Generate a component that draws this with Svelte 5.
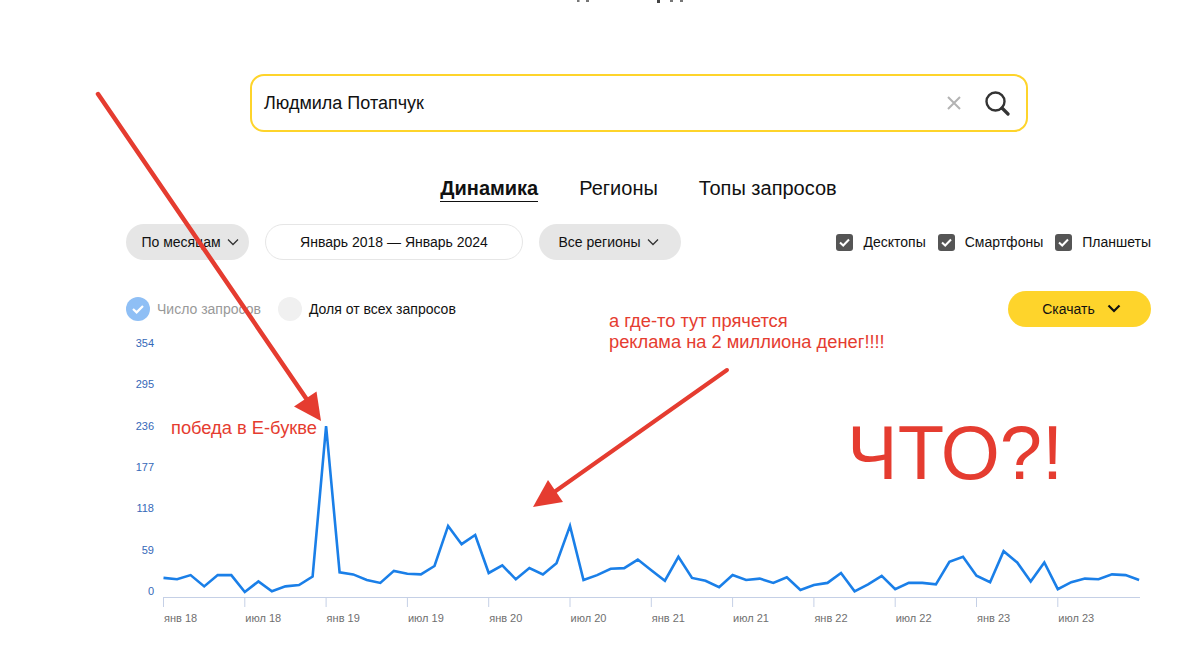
<script>
  const values = [
    20, 18, 24, 8, 24, 24, 0, 15, 1, 8, 10, 22, 236, 28, 25, 17, 13, 30, 26, 25, 37, 94, 68, 81,
    27, 38, 18, 34, 25, 41, 94, 17, 24, 33, 34, 46, 31, 16, 50, 20, 16, 7, 24, 17, 19, 13, 21, 3,
    10, 13, 27, 1, 11, 23, 4, 13, 13, 11, 43, 50, 23, 14, 58, 42, 15, 42, 4, 14, 19, 18, 25, 24, 17
  ];
  const yTicks = [354, 295, 236, 177, 118, 59, 0];
  const xTicks = ["янв 18", "июл 18", "янв 19", "июл 19", "янв 20", "июл 20", "янв 21", "июл 21", "янв 22", "июл 22", "янв 23", "июл 23"];

  const step = 13.55;
  const left = 163.5;
  const zero = 592;
  const perUnit = 0.7034;

  const linePoints = values
    .map((v, i) => `${(left + i * step).toFixed(1)},${(zero - v * perUnit).toFixed(1)}`)
    .join(" ");
</script>

<main>
  <!-- от заголовка над полем в кадр попали только нижние кончики букв -->
  <svg class="top-bits" width="1194" height="74" viewBox="0 0 1194 74">
    <path d="M577 0h2.5v2h-2.5zM586 0h3v2h-3zM670 0h3v2h-3zM680 0h3v2h-3z" fill="#777" />
    <path d="M657 0h3v3h-3z" fill="#444" />
  </svg>

  <div class="search">
    <span class="query">Людмила Потапчук</span>
    <svg class="clear" width="18" height="18" viewBox="0 0 18 18">
      <path d="M3 3l12 12M15 3L3 15" stroke="#b3b3b3" stroke-width="2" fill="none" />
    </svg>
    <svg class="loupe" width="26" height="26" viewBox="0 0 26 26">
      <circle cx="11.5" cy="11.5" r="9" stroke="#333" stroke-width="2.4" fill="none" />
      <path d="M18 18l6 6" stroke="#333" stroke-width="3.2" stroke-linecap="round" />
    </svg>
  </div>

  <nav class="tabs">
    <span class="tab active">Динамика</span>
    <span class="tab">Регионы</span>
    <span class="tab">Топы запросов</span>
  </nav>

  <div class="filters">
    <div class="pill grey months">
      По месяцам
      <svg width="12" height="8" viewBox="0 0 12 8"><path d="M1 1.5l5 5 5-5" stroke="#333" stroke-width="1.3" fill="none" /></svg>
    </div>
    <div class="pill range">Январь 2018 — Январь 2024</div>
    <div class="pill grey regions">
      Все регионы
      <svg width="12" height="8" viewBox="0 0 12 8"><path d="M1 1.5l5 5 5-5" stroke="#333" stroke-width="1.3" fill="none" /></svg>
    </div>
    <div class="devices">
      {#each ["Десктопы", "Смартфоны", "Планшеты"] as device}
        <label class="device">
          <span class="box">
            <svg width="17" height="17" viewBox="0 0 17 17"><path d="M4 8.5l3.2 3L13 5.5" stroke="#fff" stroke-width="2" fill="none" /></svg>
          </span>
          {device}
        </label>
      {/each}
    </div>
  </div>

  <div class="modes">
    <div class="mode muted">
      <span class="dot on">
        <svg width="24" height="24" viewBox="0 0 24 24"><path d="M7 12l3.6 3.4L17 9" stroke="#fff" stroke-width="2.2" fill="none" /></svg>
      </span>
      Число запросов
    </div>
    <div class="mode">
      <span class="dot"></span>
      Доля от всех запросов
    </div>
    <button class="download">
      Скачать
      <svg width="14" height="10" viewBox="0 0 14 10"><path d="M1.5 1.5L7 7l5.5-5.5" stroke="#111" stroke-width="2.2" fill="none" /></svg>
    </button>
  </div>

  <svg class="chart" width="1194" height="320" viewBox="0 330 1194 320">
    {#each yTicks as tick, i}
      <text class="y-label" x="154" y={347 + i * 41.3} text-anchor="end">{tick}</text>
    {/each}
    <path d="M163.5 597.5H1140" stroke="#c5d0e6" stroke-width="1" />
    {#each xTicks as label, i}
      <path d={`M${163.5 + i * 6 * step} 597v10`} stroke="#c5d0e6" stroke-width="1" />
      <text class="x-label" x={164 + i * 6 * step} y="622">{label}</text>
    {/each}
    <polyline points={linePoints} fill="none" stroke="#1a7fe8" stroke-width="2.6" stroke-linejoin="miter" />
  </svg>

  <!-- пометки поверх скриншота -->
  <svg class="marks" width="1194" height="655" viewBox="0 0 1194 655">
    <path d="M98 94L312 407" stroke="#e53c30" stroke-width="4.5" stroke-linecap="round" />
    <path d="M321 421L294 406.5L316.5 391.5Z" fill="#e53c30" />
    <path d="M727 370L550 495" stroke="#e53c30" stroke-width="4" stroke-linecap="round" />
    <path d="M533 507L548 480L563 502Z" fill="#e53c30" />
  </svg>
  <div class="note win">победа в Е-букве</div>
  <div class="note ads">а где-то тут прячется<br />реклама на 2 миллиона денег!!!!</div>
  <div class="what">ЧТО?!</div>
</main>

<style>
  :global(body) {
    margin: 0;
    background: #fff;
  }

  main {
    position: relative;
    width: 1194px;
    height: 655px;
    overflow: hidden;
    font-family: "Liberation Sans", Arial, sans-serif;
    color: #111;
  }

  .top-bits {
    display: block;
  }

  .search {
    display: flex;
    align-items: center;
    box-sizing: border-box;
    width: 778px;
    height: 58px;
    margin-left: 250px;
    padding: 0 16px 0 12px;
    border: 2px solid #fed42b;
    border-radius: 14px;
  }

  .query {
    flex: 1;
    font-size: 18px;
  }

  .clear {
    margin-right: 21px;
  }

  .tabs {
    display: flex;
    justify-content: center;
    gap: 41px;
    margin-top: 45px;
    padding-left: 83px;
    font-size: 20px;
  }

  .tab {
    padding-bottom: 1px;
    border-bottom: 1px solid transparent;
  }

  .tab.active {
    font-weight: bold;
    border-bottom-color: #111;
  }

  .filters {
    display: flex;
    align-items: center;
    gap: 16px;
    margin-top: 22px;
    padding: 0 43px 0 126px;
    font-size: 14px;
  }

  .pill {
    display: flex;
    align-items: center;
    justify-content: center;
    box-sizing: border-box;
    height: 36px;
    border-radius: 18px;
    gap: 6px;
  }

  .pill.grey {
    background: #e6e6e6;
  }

  .months {
    width: 123px;
    padding-left: 5px;
  }

  .range {
    width: 258px;
    border: 1px solid #e6e6e6;
  }

  .regions {
    width: 142px;
    margin-right: auto;
    padding-right: 3px;
  }

  .devices {
    display: flex;
    gap: 12px;
  }

  .device {
    display: flex;
    align-items: center;
    gap: 10px;
  }

  .box {
    display: block;
    width: 17px;
    height: 17px;
    background: #555;
    border-radius: 3px;
  }

  .box svg,
  .dot svg {
    display: block;
  }

  .modes {
    display: flex;
    align-items: center;
    height: 36px;
    margin-top: 31px;
    padding: 0 43px 0 126px;
    font-size: 14px;
  }

  .mode {
    display: flex;
    align-items: center;
    gap: 7px;
    margin-right: 16px;
  }

  .mode + .mode {
    margin-left: 1px;
  }

  .mode.muted {
    color: #999;
  }

  .dot {
    display: block;
    width: 24px;
    height: 24px;
    border-radius: 50%;
    background: #f0f0f0;
  }

  .dot.on {
    background: #8fbff5;
  }

  .download {
    display: flex;
    align-items: center;
    justify-content: center;
    gap: 12px;
    width: 143px;
    height: 36px;
    margin-left: auto;
    padding: 0 0 0 4px;
    border: none;
    border-radius: 18px;
    background: #fed42b;
    color: #111;
    font: inherit;
  }

  .chart {
    display: block;
    margin-top: 3px;
  }

  .y-label {
    font-size: 11px;
    fill: #3568b8;
  }

  .x-label {
    font-size: 11px;
    fill: #6f6f6f;
  }

  .marks {
    position: absolute;
    inset: 0;
    pointer-events: none;
  }

  .note {
    position: absolute;
    color: #e53c30;
    font-size: 18.3px;
    line-height: 20.5px;
  }

  .win {
    left: 171px;
    top: 418px;
  }

  .ads {
    left: 609px;
    top: 311px;
  }

  .what {
    position: absolute;
    left: 847px;
    top: 408px;
    color: #e53c30;
    font-size: 76px;
    line-height: 90px;
  }
</style>
